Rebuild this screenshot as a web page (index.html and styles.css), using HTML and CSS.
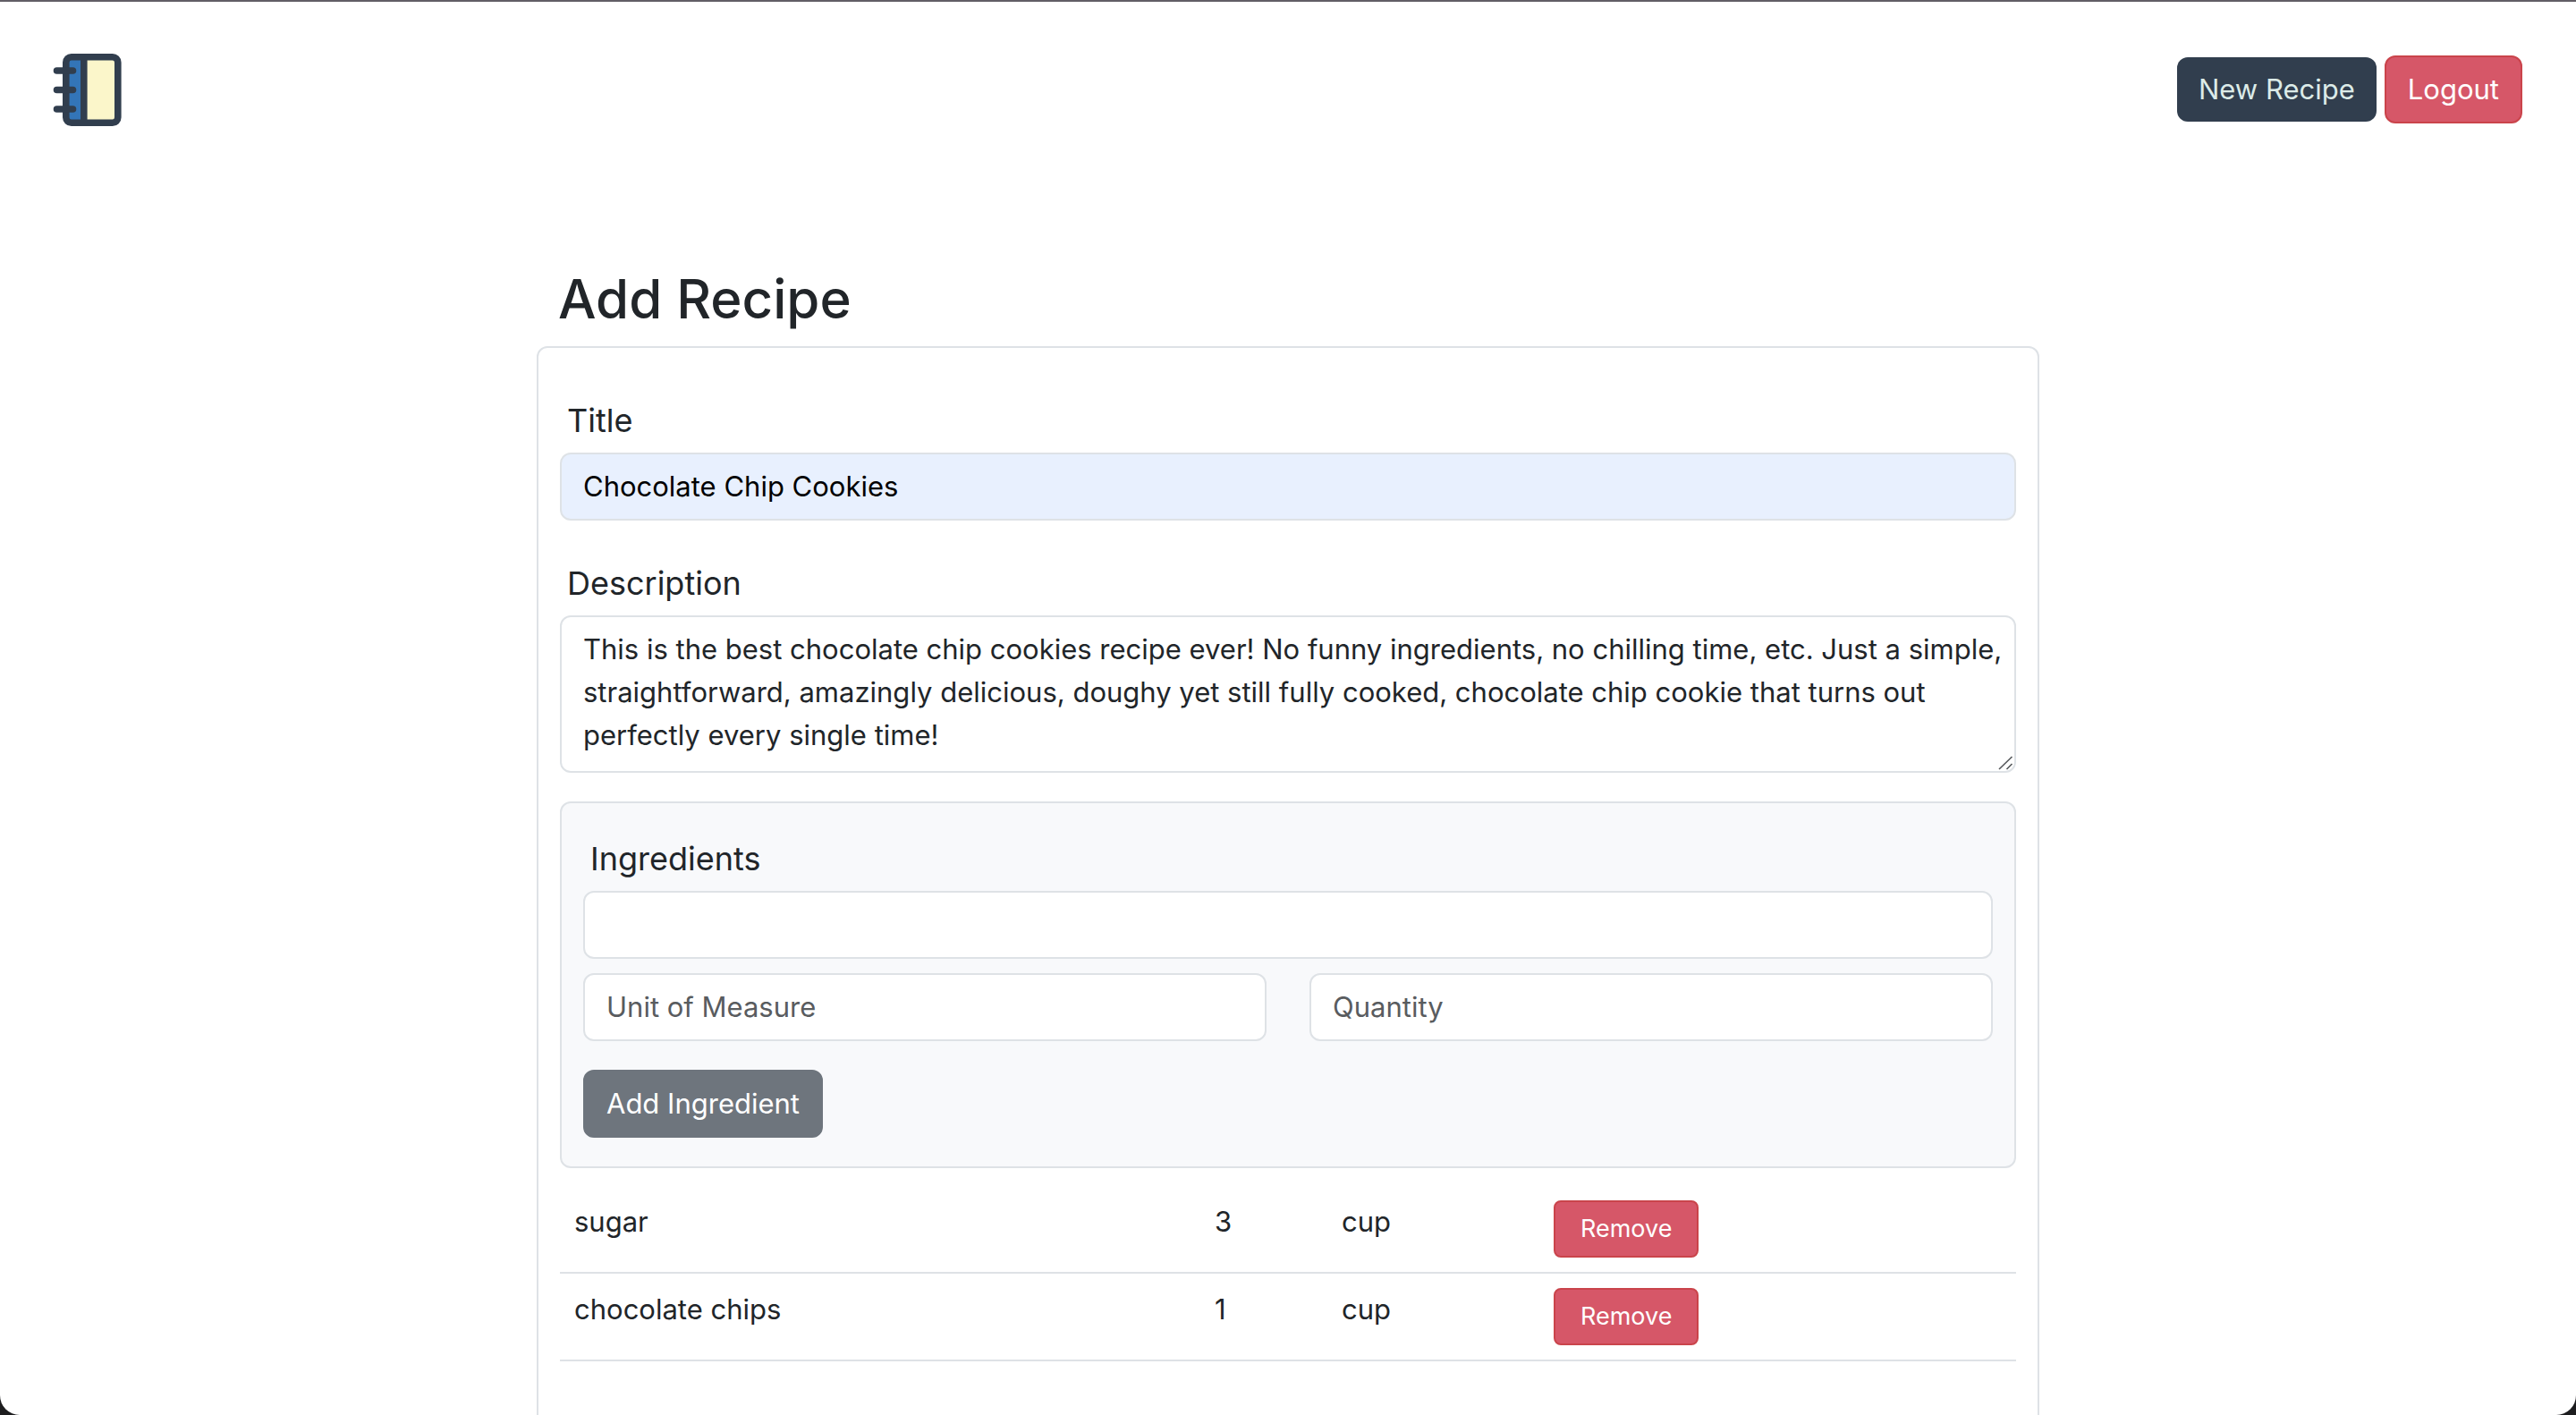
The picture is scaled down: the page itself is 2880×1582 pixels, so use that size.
FILE: index.html
```html
<!DOCTYPE html>
<html lang="en">
<head>
  <meta charset="utf-8">
  <meta name="viewport" content="width=device-width, initial-scale=1">
  <title>Add Recipe</title>
  <link rel="stylesheet" href="styles.css">
</head>
<body>
  <div class="window">
    <header class="navbar">
      <a class="brand" href="#" aria-label="Home">
        <svg class="brand-icon" viewBox="0 0 80 84" aria-hidden="true">
          <rect x="15" y="7" width="19" height="71" fill="#3375b8"/>
          <rect x="34" y="7" width="36" height="71" fill="#fbf6ca"/>
          <g fill="none" stroke="#313e4e" stroke-width="7.600">
            <rect x="13.800" y="5.800" width="58" height="73.400" rx="6"/>
            <path d="M33.800 6v73"/>
            <path d="M3.500 21h18M3.500 42.500h18M3.500 64h18" stroke-linecap="round"/>
          </g>
        </svg>
      </a>
      <nav class="nav-actions">
        <a class="btn btn-dark" href="#">New Recipe</a>
        <button class="btn btn-danger" type="button">Logout</button>
      </nav>
    </header>

    <main class="container">
      <h1 class="page-title">Add Recipe</h1>
      <form class="card">
        <div class="field">
          <label class="label" for="title">Title</label>
          <input class="control control-filled" id="title" type="text" value="Chocolate Chip Cookies">
        </div>
        <div class="field">
          <label class="label" for="description">Description</label>
          <div class="area-wrap">
            <textarea class="control control-area" id="description" rows="3">This is the best chocolate chip cookies recipe ever! No funny ingredients, no chilling time, etc. Just a simple, straightforward, amazingly delicious, doughy yet still fully cooked, chocolate chip cookie that turns out perfectly every single time!</textarea>
            <svg class="grip" viewBox="0 0 20 20" aria-hidden="true">
              <path d="M4 19L18.500 5M12.500 19l6-6" fill="none" stroke="#55585b" stroke-width="1.600"/>
            </svg>
          </div>
        </div>
        <section class="panel">
          <label class="label" for="ingredient">Ingredients</label>
          <input class="control" id="ingredient" type="text">
          <div class="panel-row">
            <input class="control" type="text" placeholder="Unit of Measure" aria-label="Unit of Measure">
            <input class="control" type="text" placeholder="Quantity" aria-label="Quantity">
          </div>
          <button class="btn btn-secondary" type="button">Add Ingredient</button>
        </section>
        <table class="ingredients">
          <tbody>
            <tr>
              <td>sugar</td>
              <td class="col-quantity">3</td>
              <td class="col-unit">cup</td>
              <td class="col-action"><button class="btn btn-danger btn-small" type="button">Remove</button></td>
            </tr>
            <tr>
              <td>chocolate chips</td>
              <td class="col-quantity">1</td>
              <td class="col-unit">cup</td>
              <td class="col-action"><button class="btn btn-danger btn-small" type="button">Remove</button></td>
            </tr>
          </tbody>
        </table>
      </form>
    </main>
  </div>
</body>
</html>
```
FILE: styles.css
```css
*,
*::before,
*::after {
  box-sizing: border-box;
}

html {
  background: #1d1d1f;
}

body {
  margin: 0;
  color: #212529;
  font-family: Inter, "Liberation Sans", sans-serif;
  font-size: 31px;
  line-height: 48px;
}

.window {
  height: 100vh;
  overflow: auto;
  scrollbar-width: none;
  background: #fff;
  border-top: 2px solid #625e66;
  border-radius: 0 0 22px 22px;
}

.navbar {
  display: flex;
  align-items: center;
  justify-content: space-between;
  padding: 56px 60px;
}

.brand {
  display: block;
}

.brand-icon {
  display: block;
  width: 80px;
  height: 84px;
  overflow: visible;
}

.nav-actions {
  display: flex;
  align-items: center;
  gap: 9px;
}

.btn {
  display: inline-block;
  padding: 12px 24px;
  border: 2px solid transparent;
  border-radius: 12px;
  font: inherit;
  text-decoration: none;
  cursor: pointer;
}

.btn-dark {
  border: 0;
  background: #313e4e;
  color: #dcebe8;
}

.btn-danger {
  background: #d65768;
  border-color: #ca444b;
  color: #fff;
}

.btn-secondary {
  background: #6e757d;
  border-color: #6e757d;
  color: #fff;
}

.btn-small {
  padding: 8px 28px;
  border-radius: 8px;
  font-size: 27px;
  line-height: 44px;
}

.container {
  max-width: 1680px;
  margin: 0 auto;
  padding-top: 98px;
}

.page-title {
  margin: 0 0 15px;
  padding: 0 24px;
  font-size: 60px;
  font-weight: 500;
  line-height: 76px;
}

.card {
  min-height: 1400px;
  padding: 43px 24px;
  border: 2px solid #dee2e6;
  border-radius: 12px;
}

.field {
  margin-bottom: 32px;
}

.label {
  display: block;
  padding: 8px 8px 6px;
  font-size: 36px;
  line-height: 60px;
}

.control {
  display: block;
  width: 100%;
  padding: 12px 24px;
  background: #fff;
  border: 2px solid #dee2e6;
  border-radius: 12px;
  color: inherit;
  font: inherit;
}

.control::placeholder {
  color: #595c5f;
  opacity: 1;
}

.control-filled {
  background: #e8f0fe;
  color: #000;
}

.area-wrap {
  position: relative;
}

.control-area {
  height: 176px;
  padding-right: 12px;
  overflow: hidden;
  resize: none;
}

.grip {
  position: absolute;
  right: 3px;
  bottom: 3px;
  width: 20px;
  height: 20px;
}

.panel {
  padding: 24px 24px 32px;
  background: #f8f9fb;
  border: 2px solid #dee2e6;
  border-radius: 12px;
}

.panel-row {
  display: flex;
  gap: 48px;
  margin: 16px 0 32px;
}

.ingredients {
  width: 100%;
  margin-top: 20px;
  border-collapse: collapse;
  table-layout: fixed;
}

.ingredients td {
  padding: 16px;
  border-bottom: 2px solid #dee2e6;
  vertical-align: top;
}

.ingredients .btn {
  display: block;
}

.col-quantity {
  width: 142px;
}

.col-unit {
  width: 237px;
}

.col-action {
  width: 533px;
}
```
